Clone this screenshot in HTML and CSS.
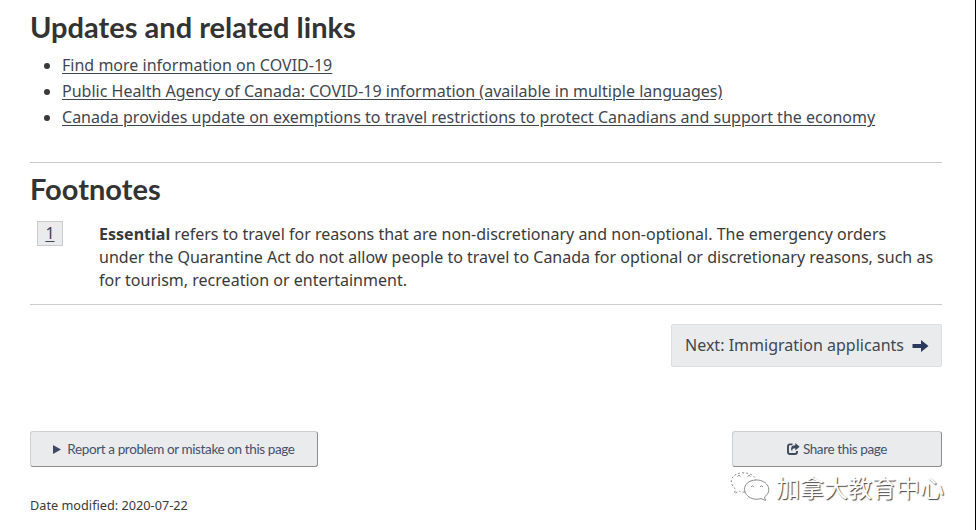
FILE: index.html
```html
<!DOCTYPE html>
<html lang="en">
<head>
    <meta charset="UTF-8">
    <meta name="viewport" content="width=device-width, initial-scale=1.0">
    <title>Updates and related links</title>
    <link rel="stylesheet" href="styles.css">
</head>
<body>
    <main>
        <section class="updates">
            <h2>Updates and related links</h2>
            <ul>
                <li><a href="#">Find more information on COVID-19</a></li>
                <li><a href="#">Public Health Agency of Canada: COVID-19 information (available in multiple languages)</a></li>
                <li><a href="#">Canada provides update on exemptions to travel restrictions to protect Canadians and support the economy</a></li>
            </ul>
        </section>

        <section class="footnotes">
            <h2>Footnotes</h2>
            <div class="note">
                <a class="note-number" href="#">1</a>
                <p><strong>Essential</strong> refers to travel for reasons that are non-discretionary and non-optional. The emergency orders<br>under the Quarantine Act do not allow people to travel to Canada for optional or discretionary reasons, such as<br>for tourism, recreation or entertainment.</p>
            </div>
        </section>

        <nav class="pager">
            <a class="next" href="#">Next: Immigration applicants
                <svg width="17" height="14" viewBox="0 0 17 14"><path d="M0.500 5h8.500V1l7.500 6-7.500 6V9H0.500z" fill="#2b3a5c"/></svg>
            </a>
        </nav>

        <div class="actions">
            <button class="report">
                <svg width="8" height="9" viewBox="0 0 8 9"><path d="M0 0l8 4.500-8 4.500z" fill="#3c4a66"/></svg>
                Report a problem or mistake on this page
            </button>
            <button class="share">
                <svg width="13" height="12" viewBox="0 0 13 12"><path d="M5.500 1.400H3Q1 1.400 1 3.400V9Q1 11 3 11H8Q10 11 10 9V8" fill="none" stroke="#3c4a5c" stroke-width="1.900"/><path d="M8.300 0L12.600 3.800 8.300 7.500V5.300C6 5.200 5 6 5.200 8.500 2.800 5.300 4.500 2.300 8.300 2.300z" fill="#3c4a5c"/></svg>
                Share this page
            </button>
        </div>

        <p class="date">Date modified: 2020-07-22</p>
    </main>

    <div class="watermark">
        <svg width="40" height="30" viewBox="0 0 40 30" fill="none" stroke="#8b8b8b" stroke-width="1">
            <path d="M15 20Q11 20.500 9 19L4.500 21.500 5.500 17C-3 10 2 1 13 0.800 20 0.800 25 4 26 8" stroke-dasharray="2 2"/>
            <path d="M26.500 8C18 8 14.500 13 14.500 17.500 15 25 24 29 31 26.500L35.500 28.500 34.500 25C43 19 38 8 26.500 8z"/>
            <path d="M7.500 4.500q1.500-2.500 3 0M17.500 4.500q1.500-2.500 3 0M21 15q1.500-2.500 3 0M30 15q1.500-2.500 3 0"/>
        </svg>
        <span>加拿大教育中心</span>
    </div>
</body>
</html>
```

FILE: styles.css
```css
* {
    box-sizing: border-box;
}
body {
    font-family: "Noto Sans", sans-serif;
    font-size: 16px;
    line-height: 23px;
    letter-spacing: 0.013px;
    margin: 0;
    height: 530px;
    overflow: hidden;
    color: #3a3a3a;
    background-color: #fff;
    border-right: 1px solid #000;
}
main {
    padding: 11px 33px 0 30px;
}
h2 {
    font-family: Lato, sans-serif;
    font-size: 29px;
    line-height: 32px;
    font-weight: 700;
    color: #333;
    margin: 0;
}
a {
    color: #3f4650;
    text-underline-offset: 2px;
}
.updates {
    height: 152px;
    border-bottom: 1px solid #ccc;
}
ul {
    margin: 9px 0 0;
    padding-left: 32px;
}
li {
    line-height: 26px;
    white-space: nowrap;
}
.footnotes {
    height: 142px;
    padding-top: 10px;
    border-bottom: 1px solid #ccc;
}
.note {
    display: flex;
    align-items: flex-start;
    margin: 16px 0 0 7px;
}
.note-number {
    width: 26px;
    height: 25px;
    margin-right: 36px;
    text-align: center;
    background-color: #eaebed;
    border: 1px solid #ccc;
}
.note p {
    margin: 2px 0 0;
    white-space: nowrap;
}
.pager {
    display: flex;
    justify-content: flex-end;
    margin-top: 19px;
}
.next {
    display: flex;
    align-items: center;
    justify-content: space-between;
    width: 271px;
    height: 43px;
    padding: 0 12px 0 13px;
    text-decoration: none;
    white-space: nowrap;
    background-color: #eaebed;
    border: 1px solid #dcdee1;
    border-radius: 2px;
}
.actions {
    display: flex;
    justify-content: space-between;
    margin-top: 64px;
}
button {
    display: flex;
    align-items: center;
    justify-content: center;
    height: 36px;
    padding: 0;
    font-family: Lato, sans-serif;
    font-size: 13.5px;
    letter-spacing: -0.38px;
    color: #44516a;
    white-space: nowrap;
    background-color: #eaebed;
    border: 1px solid #ccced1;
    border-right-color: #8d8d8d;
    border-bottom-color: #8d8d8d;
    border-radius: 3px;
}
.report {
    width: 288px;
    gap: 6px;
}
.share {
    width: 210px;
    gap: 3px;
}
.date {
    margin: 27px 0 0;
    font-size: 12.7px;
}
.watermark {
    position: absolute;
    left: 730px;
    top: 472px;
    display: flex;
    align-items: center;
    gap: 6px;
    font-family: "Noto Sans CJK SC", sans-serif;
    font-size: 24px;
    line-height: 30px;
    color: #fff;
    text-shadow: 1px 1px 1px #444;
    white-space: nowrap;
}
```
